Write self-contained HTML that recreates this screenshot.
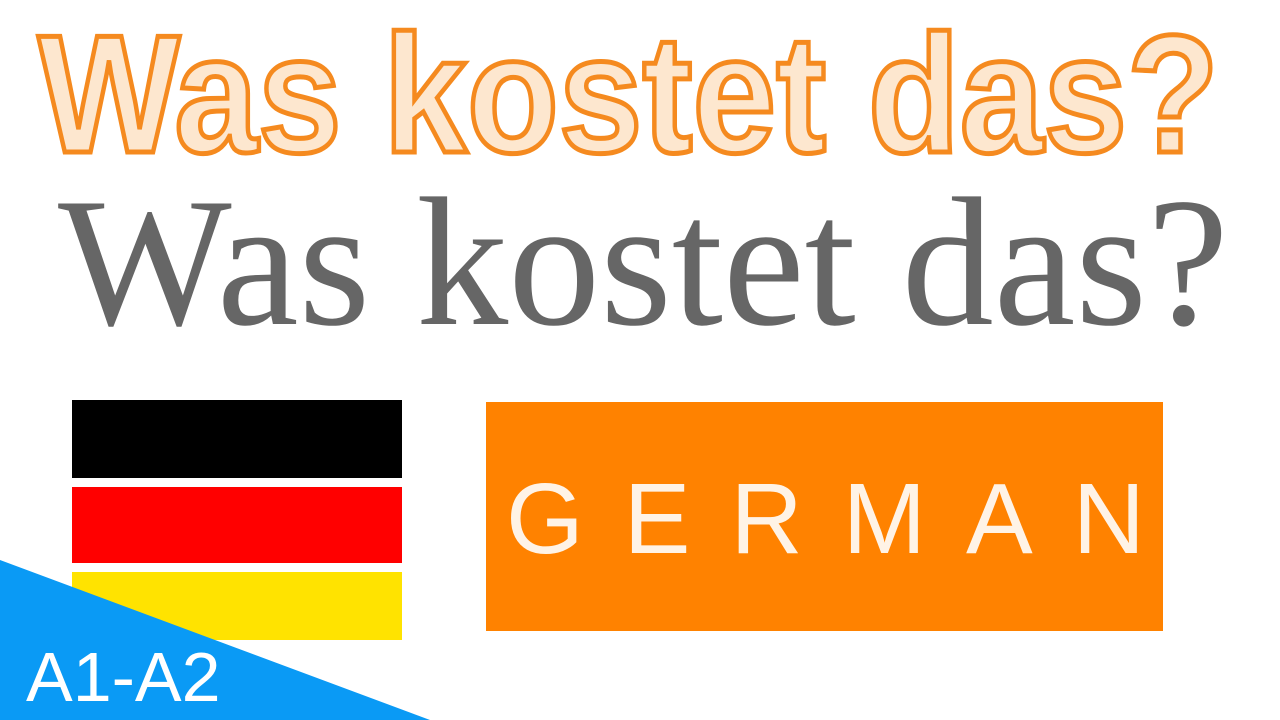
<!DOCTYPE html>
<html><head><meta charset="utf-8"><style>
body{margin:0;width:1280px;height:720px;background:#fff;position:relative;overflow:hidden;font-family:"Liberation Sans",sans-serif}
.t1{position:absolute;left:38px;top:4px;font-weight:bold;font-size:168px;line-height:180px;color:#fde7cf;-webkit-text-stroke:5px #f58a1f;white-space:nowrap;transform-origin:0 0;transform:scaleX(0.895)}
.t2{position:absolute;left:58px;top:162px;font-family:"Liberation Serif",serif;font-size:184px;line-height:200px;color:#666;white-space:nowrap}
.box{position:absolute;left:486px;top:402px;width:677px;height:229px;background:#ff8200;overflow:hidden}
.box span{position:absolute;left:20px;top:62px;font-size:100px;line-height:110px;letter-spacing:40px;white-space:nowrap;color:#fff3e6}
</style></head><body>
<div class="t1">Was kostet das?</div>
<div class="t2">Was kostet das?</div>
<div style="position:absolute;left:72px;top:400px;width:330px;height:78px;background:#000"></div>
<div style="position:absolute;left:72px;top:487px;width:330px;height:76px;background:#f00"></div>
<div style="position:absolute;left:72px;top:572px;width:330px;height:68px;background:#ffe300"></div>
<svg style="position:absolute;left:0;top:0" width="1280" height="720"><polygon points="0,560 430,720 0,720" fill="#0a9af5"/></svg>
<div style="position:absolute;left:26px;top:642px;font-size:70px;line-height:70px;color:#fff">A1-A2</div>
<div class="box"><span>GERMAN</span></div>
</body></html>
